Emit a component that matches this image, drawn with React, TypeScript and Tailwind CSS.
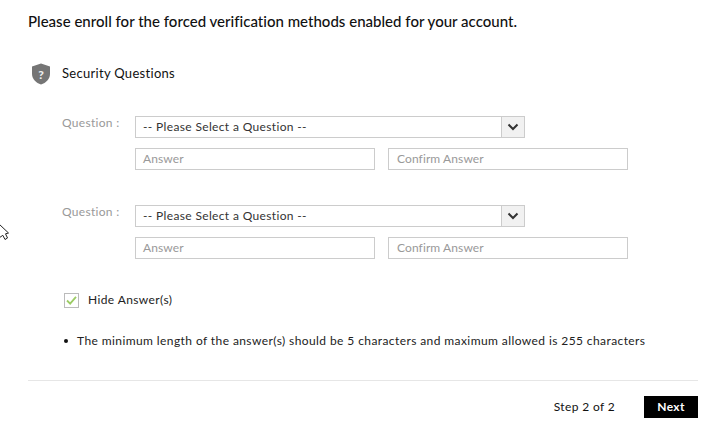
function Chevron() {
  return (
    <svg width="12" height="8" viewBox="0 0 12 8" fill="none">
      <path d="M1.5 1.5L6 6L10.5 1.5" stroke="#333" strokeWidth="2" />
    </svg>
  );
}

function QuestionGroup({ className }: { className: string }) {
  return (
    <div className={`flex ${className}`}>
      <div className="w-[107px] pl-[34px] text-[12px] leading-[14px] text-[#999] tracking-[0.3px]">Question :</div>
      <div className="flex flex-col gap-[10px]">
        <div className="flex w-[390px] h-[22px] border border-[#ccc] bg-white">
          <div className="flex-1 pl-[7px] text-[12px] leading-[20px] text-[#333] tracking-[0.35px]">-- Please Select a Question --</div>
          <div className="w-[23px] bg-[#f1f1f1] border-l border-[#ccc] flex items-center justify-center">
            <Chevron />
          </div>
        </div>
        <div className="flex gap-[13px]">
          <div className="w-[240px] h-[22px] border border-[#ccc] pl-[7px] text-[12px] leading-[20px] text-[#999] tracking-[0.1px]">Answer</div>
          <div className="w-[240px] h-[22px] border border-[#ccc] pl-[8px] text-[12px] leading-[20px] text-[#999] tracking-[0.1px]">Confirm Answer</div>
        </div>
      </div>
    </div>
  );
}

export default function App() {
  return (
    <div className="relative w-[722px] h-[439px] overflow-hidden bg-white pl-[28px] pr-[24px] pt-[11px] font-['Lato',sans-serif] text-black">
      <svg className="absolute left-0 top-[224px]" width="10" height="18" viewBox="0 0 10 18" fill="none">
        <path d="M-1 0L8.5 9L5.5 9.8L7.5 14L5 15.5L2.8 11.3L-1 14Z" fill="#fff" stroke="#222" strokeWidth="1" />
      </svg>
      <h1 className="text-[15px] leading-[20px] font-medium tracking-[0.015px] text-[#111]">Please enroll for the forced verification methods enabled for your account.</h1>
      <div className="flex items-center mt-[31px] h-[24px]">
        <svg className="ml-[4px]" width="18" height="22" viewBox="0 0 18 22">
          <path d="M9 0.5L18 3.5V11C18 16 14 20 9 21.5C4 20 0 16 0 11V3.5Z" fill="#757575" />
          <text x="9" y="15.5" textAnchor="middle" fontSize="12" fontWeight="900" fill="#eee" fontFamily="Lato, sans-serif">?</text>
        </svg>
        <span className="ml-[12px] text-[13px] tracking-[0.3px] text-[#111]">Security Questions</span>
      </div>
      <QuestionGroup className="mt-[30px]" />
      <QuestionGroup className="mt-[35px]" />
      <div className="flex items-center mt-[33px] ml-[36px] h-[16px]">
        <div className="w-[15px] h-[15px] border border-[#bbb] flex items-center justify-center">
          <svg width="11" height="9" viewBox="0 0 12 10" fill="none">
            <path d="M1 5L4.5 8.5L11 1" stroke="#9ccc65" strokeWidth="2" />
          </svg>
        </div>
        <span className="ml-[9px] text-[12px] tracking-[0.4px] text-[#222]">Hide Answer(s)</span>
      </div>
      <div className="flex items-center mt-[25px] ml-[36px] h-[16px]">
        <span className="w-[4px] h-[4px] rounded-full bg-[#111]" />
        <span className="ml-[9px] text-[12px] tracking-[0.41px] text-[#222] whitespace-nowrap">The minimum length of the answer(s) should be 5 characters and maximum allowed is 255 characters</span>
      </div>
      <div className="mt-[31px] border-t border-[#e6e6e6]" />
      <div className="flex items-center justify-end mt-[15px]">
        <span className="text-[12px] tracking-[0.35px] text-[#111]">Step 2 of 2</span>
        <div className="ml-[29px] w-[54px] h-[22px] bg-black text-white text-[12px] font-bold tracking-[0.3px] flex items-center justify-center">Next</div>
      </div>
    </div>
  );
}
